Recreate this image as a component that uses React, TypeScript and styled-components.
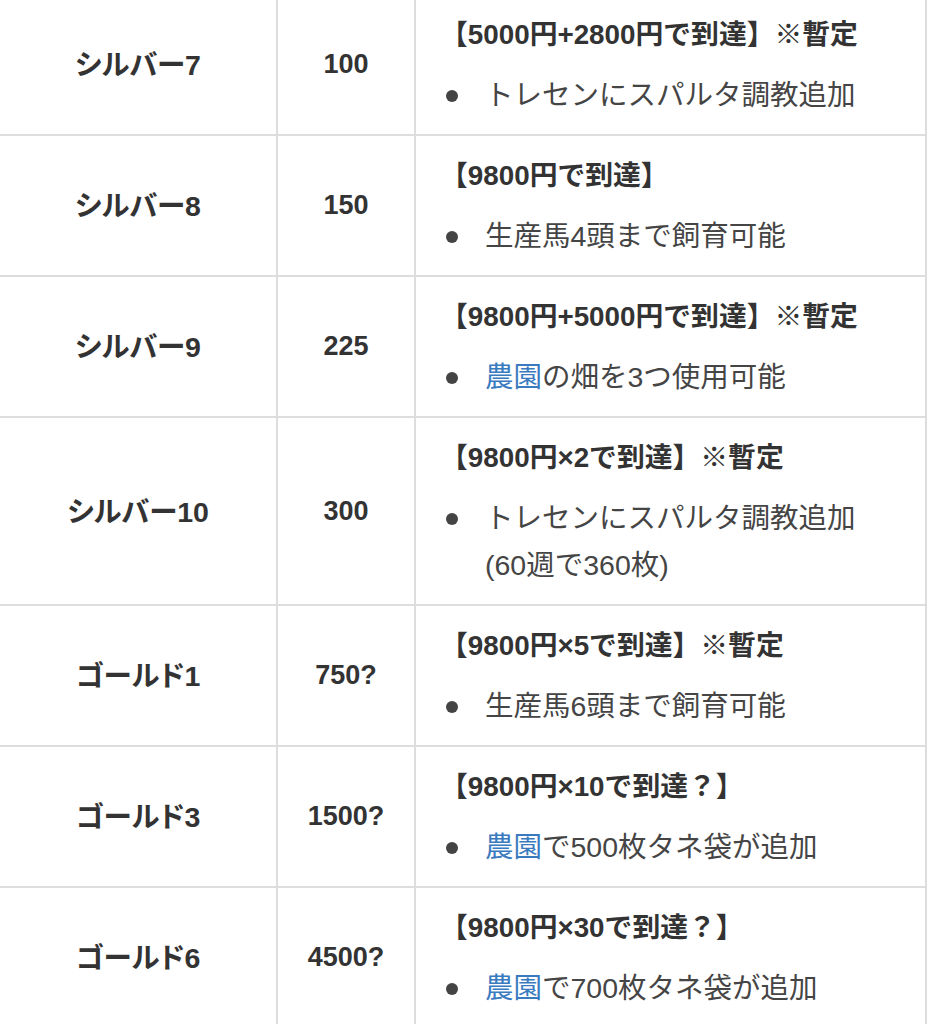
import React from "react";
import styled, { createGlobalStyle } from "styled-components";

interface Perk {
  link?: string;
  lines: string[];
}

interface Rank {
  name: string;
  points: string;
  title: string;
  perks: Perk[];
}

const ranks: Rank[] = [
  {
    name: "シルバー7",
    points: "100",
    title: "【5000円+2800円で到達】※暫定",
    perks: [{ lines: ["トレセンにスパルタ調教追加"] }],
  },
  {
    name: "シルバー8",
    points: "150",
    title: "【9800円で到達】",
    perks: [{ lines: ["生産馬4頭まで飼育可能"] }],
  },
  {
    name: "シルバー9",
    points: "225",
    title: "【9800円+5000円で到達】※暫定",
    perks: [{ link: "農園", lines: ["の畑を3つ使用可能"] }],
  },
  {
    name: "シルバー10",
    points: "300",
    title: "【9800円×2で到達】※暫定",
    perks: [{ lines: ["トレセンにスパルタ調教追加", "(60週で360枚)"] }],
  },
  {
    name: "ゴールド1",
    points: "750?",
    title: "【9800円×5で到達】※暫定",
    perks: [{ lines: ["生産馬6頭まで飼育可能"] }],
  },
  {
    name: "ゴールド3",
    points: "1500?",
    title: "【9800円×10で到達？】",
    perks: [{ link: "農園", lines: ["で500枚タネ袋が追加"] }],
  },
  {
    name: "ゴールド6",
    points: "4500?",
    title: "【9800円×30で到達？】",
    perks: [{ link: "農園", lines: ["で700枚タネ袋が追加"] }],
  },
];

const App: React.FC = () => (
  <>
    <GlobalStyle />
    <Table>
      <colgroup>
        <col style={{ width: 278 }} />
        <col style={{ width: 138 }} />
        <col style={{ width: 511 }} />
      </colgroup>
      <tbody>
        {ranks.map((rank) => (
          <tr key={rank.name}>
            <NameCell>{rank.name}</NameCell>
            <PointCell>{rank.points}</PointCell>
            <DetailCell>
              <DetailTitle>{rank.title}</DetailTitle>
              <PerkList>
                {rank.perks.map((perk, i) => (
                  <Perk key={i}>
                    {perk.link && <PerkLink href="#">{perk.link}</PerkLink>}
                    {perk.lines.map((line, j) => (
                      <React.Fragment key={j}>
                        {j > 0 && <br />}
                        {line}
                      </React.Fragment>
                    ))}
                  </Perk>
                ))}
              </PerkList>
            </DetailCell>
          </tr>
        ))}
      </tbody>
    </Table>
  </>
);

const GlobalStyle = createGlobalStyle`
  html, body {
    margin: 0;
    padding: 0;
    background: #fff;
    overflow: hidden;
  }
  body {
    font-family: "Liberation Sans", "Noto Sans CJK JP", sans-serif;
    color: #333;
  }
`;

const Table = styled.table`
  width: 927px;
  margin: -7px 0 0 -2px;
  border-collapse: collapse;
  table-layout: fixed;

  td {
    border: 2px solid #dddddd;
  }
`;

const NameCell = styled.td`
  padding-bottom: 5px;
  text-align: center;
  vertical-align: middle;
  font-size: 28.5px;
  font-weight: 700;
  color: #333;
  font-feature-settings: "palt";
`;

const PointCell = styled.td`
  text-align: center;
  vertical-align: middle;
  font-size: 27px;
  font-weight: 700;
  color: #333;
`;

const DetailCell = styled.td`
  padding: 18px 10px 15px 24px;
  vertical-align: top;
`;

const DetailTitle = styled.div`
  font-size: 27.8px;
  font-weight: 700;
  line-height: 44px;
  color: #333;
  white-space: nowrap;
`;

const PerkList = styled.ul`
  list-style: none;
  margin: 15px 0 0;
  padding: 0;
`;

const Perk = styled.li`
  position: relative;
  padding-left: 45px;
  font-size: 28.5px;
  line-height: 47px;
  color: #454545;
  white-space: nowrap;

  &::before {
    content: "";
    position: absolute;
    left: 6px;
    top: 18px;
    width: 12px;
    height: 12px;
    border-radius: 50%;
    background: #444;
  }
`;

const PerkLink = styled.a`
  color: #3a7bbf;
  text-decoration: none;
`;

export default App;
